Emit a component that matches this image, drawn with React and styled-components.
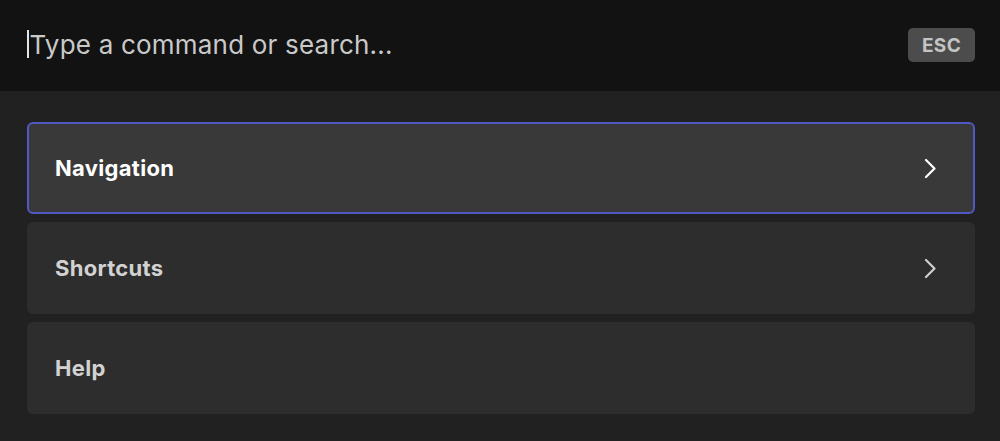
import React from "react";
import styled, { createGlobalStyle } from "styled-components";

const Global = createGlobalStyle`
  html, body { margin: 0; padding: 0; background: #212121; }
  body { font-family: Inter, "Noto Sans", "Liberation Sans", sans-serif; -webkit-font-smoothing: antialiased; }
  * { box-sizing: border-box; }
`;

const Palette = styled.div`
  width: 1000px;
  height: 441px;
  background: #212121;
  display: flex;
  flex-direction: column;
  overflow: hidden;
`;

const Header = styled.div`
  height: 91px;
  background: #121212;
  display: flex;
  align-items: center;
  justify-content: space-between;
  padding: 0 25px 0 27px;
`;

const SearchField = styled.div`
  display: flex;
  align-items: center;
  gap: 1px;
  margin-top: -3px;
`;

const Caret = styled.span`
  width: 1.5px;
  height: 28px;
  background: #e4e4e4;
`;

const Placeholder = styled.span`
  font-size: 26px;
  font-weight: 400;
  color: #c9c9c9;
  letter-spacing: 0.2px;
`;

const Kbd = styled.span`
  width: 67px;
  height: 34px;
  border-radius: 5px;
  background: #4c4c4c;
  color: #c4c4c4;
  font-size: 19px;
  font-weight: 700;
  display: flex;
  align-items: center;
  justify-content: center;
  letter-spacing: 0.4px;
  margin-top: -1px;
`;

const List = styled.div`
  display: flex;
  flex-direction: column;
  gap: 8px;
  padding: 31px 25px 27px 27px;
`;

const Item = styled.div`
  height: 92px;
  border-radius: 6px;
  border: 2px solid ${(p) => (p.$active ? "#5159c4" : "transparent")};
  background: ${(p) => (p.$active ? "#393939" : "#2d2d2d")};
  display: flex;
  align-items: center;
  justify-content: space-between;
  padding: 0 37px 0 26px;
`;

const Label = styled.span`
  font-size: 22px;
  font-weight: 700;
  letter-spacing: 0.3px;
  color: ${(p) => (p.$active ? "#ffffff" : "#d2d2d2")};
`;

const Chevron = ({ active }) => (
  <svg width="12" height="21" viewBox="0 0 12 21" fill="none">
    <polyline
      points="2,2 10.5,10.5 2,19"
      stroke={active ? "#ffffff" : "#cfcfcf"}
      strokeWidth="2.2"
      strokeLinecap="round"
      strokeLinejoin="round"
    />
  </svg>
);

const items = [
  { label: "Navigation", sub: true, active: true },
  { label: "Shortcuts", sub: true },
  { label: "Help", sub: false },
];

export default function App() {
  return (
    <>
      <Global />
      <Palette>
        <Header>
          <SearchField>
            <Caret />
            <Placeholder>Type a command or search...</Placeholder>
          </SearchField>
          <Kbd>ESC</Kbd>
        </Header>
        <List>
          {items.map((it) => (
            <Item key={it.label} $active={it.active}>
              <Label $active={it.active}>{it.label}</Label>
              {it.sub && <Chevron active={it.active} />}
            </Item>
          ))}
        </List>
      </Palette>
    </>
  );
}
